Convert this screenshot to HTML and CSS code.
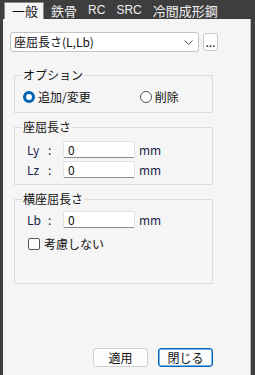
FILE: index.html
```html
<!DOCTYPE html>
<html lang="ja">

<head>
    <meta charset="UTF-8">
    <meta name="viewport" content="width=device-width, initial-scale=1.0">
    <title>部材設定</title>
    <link rel="stylesheet" href="styles.css">
</head>

<body>
    <div class="window">
        <!-- Tab strip -->
        <div class="tabs">
            <div class="tab active">一般</div>
            <div class="tab">鉄骨</div>
            <div class="tab latin">RC</div>
            <div class="tab latin">SRC</div>
            <div class="tab">冷間成形鋼</div>
        </div>

        <div class="panel">
            <!-- Item selector -->
            <div class="select-row">
                <div class="select">
                    <span>座屈長さ(L,Lb)</span>
                    <svg class="chevron" width="9" height="5" viewBox="0 0 9 5">
                        <path d="M0.5 0.5 L4.5 4.5 L8.5 0.5" fill="none" stroke="#555" stroke-width="1" />
                    </svg>
                </div>
                <button class="more">...</button>
            </div>

            <!-- Option -->
            <fieldset class="group group-option">
                <legend>オプション</legend>
                <div class="radios">
                    <label class="radio-item"><span class="radio checked"></span>追加/変更</label>
                    <label class="radio-item second"><span class="radio"></span>削除</label>
                </div>
            </fieldset>

            <!-- Buckling length -->
            <fieldset class="group group-length">
                <legend>座屈長さ</legend>
                <div class="field">
                    <span class="field-name">Ly</span>
                    <span class="colon">:</span>
                    <span class="input">0</span>
                    <span class="unit">mm</span>
                </div>
                <div class="field">
                    <span class="field-name">Lz</span>
                    <span class="colon">:</span>
                    <span class="input">0</span>
                    <span class="unit">mm</span>
                </div>
            </fieldset>

            <!-- Lateral buckling length -->
            <fieldset class="group group-lateral">
                <legend>横座屈長さ</legend>
                <div class="field">
                    <span class="field-name">Lb</span>
                    <span class="colon">:</span>
                    <span class="input">0</span>
                    <span class="unit">mm</span>
                </div>
                <label class="check-item"><span class="checkbox"></span>考慮しない</label>
            </fieldset>

            <!-- Dialog buttons -->
            <div class="actions">
                <button class="btn">適用</button>
                <button class="btn primary">閉じる</button>
            </div>
        </div>
    </div>
</body>

</html>
```

FILE: styles.css
```css
/* Dialog base */
* {
    box-sizing: border-box;
}

body {
    margin: 0;
    background-color: #3e3e3e;
    font-family: "Noto Sans CJK JP", "Noto Sans", sans-serif;
    font-size: 12px;
    color: #111;
}

.window {
    width: 255px;
    height: 375px;
    display: flex;
    flex-direction: column;
}

/* Tabs */
.tabs {
    display: flex;
    height: 19px;
    padding: 2px 0 0 4px;
}

.tab {
    font-size: 13px;
    line-height: 17px;
    padding: 0 5px 0 6px;
    color: #f0f0f0;
}

.tab.latin {
    font-family: "Liberation Sans", sans-serif;
    font-size: 12px;
}

.tab.active {
    background-color: #f5f5f5;
    color: #111;
    border: 1px solid #8a8a8a;
    border-bottom: none;
    padding: 0 5px 0 7px;
    margin-right: 1px;
    line-height: 16px;
}

/* Panel */
.panel {
    flex: 1;
    margin: 0 4px 0 3px;
    background-color: #f5f5f5;
    border-right: 1px solid #b8b8b8;
    padding: 13px 0 8px 7px;
    display: flex;
    flex-direction: column;
}

.select-row {
    display: flex;
    align-items: flex-start;
}

.select {
    width: 189px;
    height: 20px;
    background-color: #fff;
    border: 1px solid #c4c4c4;
    border-radius: 3px;
    display: flex;
    align-items: center;
    justify-content: space-between;
    padding: 0 5px 0 3px;
    line-height: 18px;
}

.chevron {
    margin-top: 1px;
}

.more {
    margin: 1px 0 0 4px;
    width: 15px;
    height: 18px;
    padding: 0;
    border: 1px solid #c8c8c8;
    border-radius: 3px;
    background-color: #fff;
    font-family: inherit;
    font-size: 12px;
    line-height: 12px;
    color: #111;
}

/* Group boxes */
.group {
    width: 199px;
    margin: 7px 0 0 4px;
    padding: 0 7px;
    border: 1px solid #dcdcdc;
    min-width: 0;
}

.group legend {
    padding: 0 1px;
    line-height: 14px;
    font-size: 12px;
}

.group-option {
    margin-top: 16px;
    padding-bottom: 8px;
}

.radios {
    display: flex;
    margin-top: 8px;
    height: 14px;
    align-items: center;
}

.radio-item {
    display: flex;
    align-items: center;
    margin-left: 1px;
    line-height: 14px;
}

.radio-item.second {
    margin-left: 49px;
}

.radio {
    width: 12px;
    height: 12px;
    border-radius: 50%;
    border: 1px solid #555;
    background-color: #fff;
    margin-right: 3px;
}

.radio.checked {
    border: 3px solid #0063b1;
    background-color: #fff;
}

/* Input rows */
.group-length {
    padding-bottom: 6px;
}

.group-length .field:first-of-type {
    margin-top: 7px;
}

.field {
    display: flex;
    align-items: center;
    height: 17px;
    margin-top: 3px;
    padding-left: 5px;
}

.field-name {
    width: 21px;
    color: #1a1f4a;
}

.colon {
    width: 15px;
    color: #1a1f4a;
}

.input {
    width: 72px;
    height: 17px;
    background-color: #fff;
    border: 1px solid #e2e2e2;
    border-bottom: 1px solid #8a8a8a;
    border-radius: 2px;
    padding-left: 4px;
    line-height: 15px;
}

.unit {
    margin-left: 4px;
    color: #1a1f4a;
}

.group-lateral {
    padding-bottom: 33px;
}

.group-lateral .field {
    margin-top: 5px;
}

.check-item {
    display: flex;
    align-items: center;
    margin: 10px 0 0 6px;
    line-height: 12px;
}

.checkbox {
    width: 12px;
    height: 12px;
    border: 1px solid #555;
    border-radius: 2px;
    background-color: #fff;
    margin-right: 4px;
}

/* Bottom buttons */
.actions {
    margin-top: auto;
    display: flex;
    justify-content: flex-end;
    gap: 10px;
    padding-right: 37px;
}

.btn {
    width: 55px;
    height: 19px;
    padding: 0;
    background-color: #fdfdfd;
    border: 1px solid #cfcfcf;
    border-radius: 3px;
    font-family: inherit;
    font-size: 12px;
    line-height: 16px;
    color: #111;
}

.btn.primary {
    border: 1px solid #0067c0;
    box-shadow: inset 0 0 0 0.5px #0067c0;
}
```
